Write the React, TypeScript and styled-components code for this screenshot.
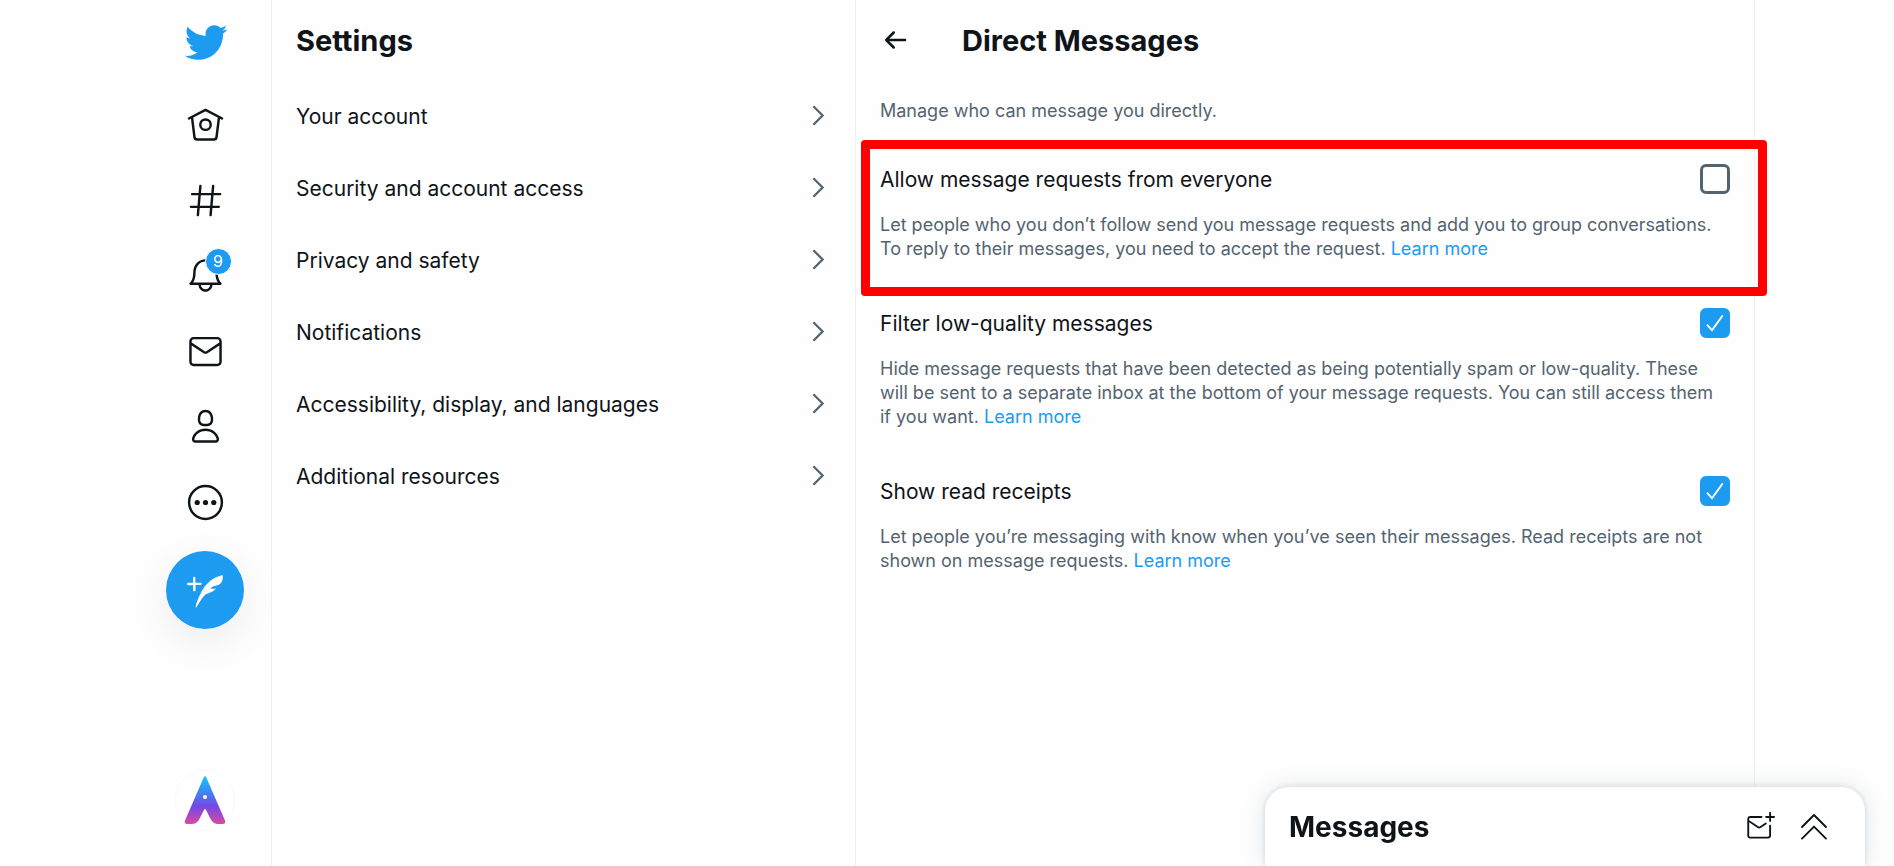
import React, { useState } from 'react';
import styled, { createGlobalStyle } from 'styled-components';

const ink = '#0f1419';
const muted = '#536471';
const blue = '#1d9bf0';
const line = '#eff1f2';

const GlobalStyle = createGlobalStyle`
  *, *::before, *::after { box-sizing: border-box; }
  body {
    margin: 0;
    background: #fefefe;
    color: ${ink};
    font-family: Inter, "Liberation Sans", sans-serif;
    font-size: 18px;
    line-height: 24px;
  }
  h1, h2, p, ul { margin: 0; padding: 0; }
  a { color: inherit; text-decoration: none; }
  button { font: inherit; color: inherit; border: 0; background: none; padding: 0; cursor: pointer; }
`;

const Page = styled.div`
  display: grid;
  grid-template-columns: 132px minmax(0, 584px) minmax(0, 900px);
  justify-content: center;
  min-height: 100vh;
`;

const Sidebar = styled.header`
  position: sticky;
  top: 0;
  display: flex;
  flex-direction: column;
  align-items: center;
  height: 100vh;
  padding: 3px 0 36px;
`;

const LogoLink = styled.a`
  display: grid;
  place-items: center;
  width: 78px;
  height: 78px;
  margin-bottom: 6px;
  color: ${blue};
`;

const NavList = styled.nav`
  display: flex;
  flex-direction: column;
  height: 453px;
`;

const NavLink = styled.a`
  display: grid;
  place-items: center;
  flex: 1;
  width: 75px;
`;

const NavIcon = styled.span`
  position: relative;
  display: grid;
`;

const Badge = styled.span`
  position: absolute;
  top: -8px;
  right: -7px;
  width: 27px;
  height: 27px;
  border: 1px solid #fefefe;
  border-radius: 50%;
  background: ${blue};
  color: #fff;
  font-size: 16px;
  line-height: 25px;
  text-align: center;
`;

const ComposeButton = styled.button`
  display: grid;
  place-items: center;
  width: 78px;
  height: 78px;
  margin-top: 11px;
  border-radius: 50%;
  background: ${blue};
  color: #fff;
  box-shadow: 0 12px 42px rgba(0, 0, 0, 0.08);
`;

const AccountButton = styled.button`
  display: grid;
  place-items: center;
  width: 60px;
  height: 60px;
  margin-top: auto;
  border-radius: 50%;
  background: #fff;
`;

const Column = styled.section`
  border-left: 1px solid ${line};
`;

const DetailColumn = styled(Column)`
  border-right: 1px solid ${line};
`;

const ColumnHeader = styled.div`
  display: flex;
  align-items: center;
  height: 80px;
  padding: 0 24px;
`;

const Title = styled.h2`
  padding-top: 2px;
  font-size: 29px;
  line-height: 36px;
  font-weight: 700;
`;

const BackButton = styled.button`
  display: grid;
  width: 82px;
`;

const MenuList = styled.ul`
  list-style: none;
`;

const MenuLink = styled.a`
  display: flex;
  align-items: center;
  justify-content: space-between;
  height: 72px;
  padding: 0 30px 0 24px;
  font-size: 21px;
`;

const RowText = styled.span`
  padding-top: 2px;
`;

const Intro = styled.p`
  padding: 19px 24px 25px;
  color: ${muted};
`;

const Setting = styled.div`
  position: relative;
  padding: 16px 24px 31px;
`;

const Highlight = styled.div`
  position: absolute;
  inset: -8px -13px -4px 5px;
  border: 9px solid #ff0000;
  border-radius: 4px;
  pointer-events: none;
`;

const SettingLabel = styled.label`
  display: flex;
  align-items: center;
  justify-content: space-between;
  height: 30px;
  margin-bottom: 19px;
  font-size: 21px;
`;

const CheckWrap = styled.span`
  display: grid;
  > * { grid-area: 1 / 1; }
  > svg { pointer-events: none; }
`;

const CheckInput = styled.input`
  appearance: none;
  width: 30px;
  height: 30px;
  margin: 0;
  border: 3px solid ${muted};
  border-radius: 6px;
  &:checked { border-color: ${blue}; background: ${blue}; }
`;

const Description = styled.p`
  padding-right: 8px;
  color: ${muted};
`;

const TextLink = styled.a`
  color: ${blue};
`;

const Drawer = styled.aside`
  position: fixed;
  right: 29px;
  bottom: 0;
  display: flex;
  align-items: center;
  width: 600px;
  max-width: 100%;
  height: 79px;
  padding: 0 36px 0 24px;
  border-radius: 24px 24px 0 0;
  background: #fff;
  box-shadow: 0 0 22px rgba(101, 119, 134, 0.2), 0 0 4px 1px rgba(101, 119, 134, 0.15);
`;

const DrawerTitle = styled(Title)`
  flex: 1;
  padding-top: 0;
  font-size: 28px;
`;

const DrawerActions = styled.div`
  display: flex;
  gap: 24px;
`;

const IconButton = styled.button`
  display: grid;
`;

function Glyph({ d, size }: { d: string; size: number }) {
  return (
    <svg width={size} height={size} viewBox="0 0 24 24" fill="currentColor" aria-hidden="true">
      <path d={d} />
    </svg>
  );
}

const paths = {
  bird: 'M23.643 4.937c-.835.37-1.732.62-2.675.733.962-.576 1.7-1.49 2.048-2.578-.9.534-1.897.922-2.958 1.13-.85-.904-2.06-1.47-3.4-1.47-2.572 0-4.658 2.086-4.658 4.66 0 .364.042.718.12 1.06-3.873-.195-7.304-2.05-9.602-4.868-.4.69-.63 1.49-.63 2.342 0 1.616.823 3.043 2.072 3.878-.764-.025-1.482-.234-2.11-.583v.06c0 2.257 1.605 4.14 3.737 4.568-.392.106-.803.162-1.227.162-.3 0-.593-.028-.877-.082.593 1.85 2.313 3.198 4.352 3.234-1.595 1.25-3.604 1.995-5.786 1.995-.376 0-.747-.022-1.112-.065 2.062 1.323 4.51 2.093 7.14 2.093 8.57 0 13.255-7.098 13.255-13.254 0-.2-.005-.402-.014-.602.91-.658 1.7-1.477 2.323-2.41z',
  hash: 'M21 7.337h-3.93l.372-4.272c.036-.412-.27-.775-.682-.812-.417-.03-.776.27-.812.683l-.383 4.4h-6.32l.37-4.27c.037-.413-.27-.776-.68-.813-.42-.03-.777.27-.813.683l-.382 4.4H3.782c-.414 0-.75.337-.75.75s.336.75.75.75H7.61l-.55 6.327H3c-.414 0-.75.336-.75.75s.336.75.75.75h3.93l-.372 4.272c-.036.412.27.775.682.812l.066.003c.385 0 .712-.295.746-.686l.383-4.4h6.32l-.37 4.27c-.036.413.27.776.682.813l.066.003c.385 0 .712-.295.746-.686l.382-4.4h3.957c.413 0 .75-.337.75-.75s-.337-.75-.75-.75H16.39l.55-6.327H21c.414 0 .75-.336.75-.75s-.336-.75-.75-.75zm-6.115 7.826h-6.32l.55-6.326h6.32l-.55 6.326z',
  bell: 'M21.697 16.468c-.02-.016-2.14-1.64-2.103-6.03.02-2.532-.812-4.782-2.347-6.335C15.872 2.71 14.01 1.94 12.005 1.93h-.013c-2.004.01-3.866.78-5.242 2.174-1.534 1.553-2.368 3.802-2.346 6.334.037 4.33-2.02 5.967-2.102 6.03-.26.193-.366.53-.265.838.102.308.39.515.712.515h4.92c.102 2.31 1.997 4.16 4.33 4.16s4.226-1.85 4.327-4.16h4.922c.322 0 .61-.206.71-.514.103-.307-.003-.645-.263-.838zM12 20.478c-1.505 0-2.73-1.177-2.828-2.658h5.656c-.1 1.48-1.323 2.66-2.828 2.66zM4.38 16.32c.74-1.132 1.548-3.028 1.524-5.896-.018-2.16.644-3.982 1.913-5.267C8.91 4.05 10.397 3.437 12 3.43c1.603.008 3.087.62 4.18 1.728 1.27 1.285 1.933 3.106 1.915 5.267-.024 2.868.785 4.765 1.525 5.896H4.38z',
  mail: 'M19.25 3.018H4.75C3.233 3.018 2 4.252 2 5.77v12.495c0 1.518 1.233 2.753 2.75 2.753h14.5c1.517 0 2.75-1.235 2.75-2.753V5.77c0-1.518-1.233-2.752-2.75-2.752zm-14.5 1.5h14.5c.69 0 1.25.56 1.25 1.25v.714l-8.05 5.367c-.273.18-.626.182-.9-.002L3.5 6.482v-.714c0-.69.56-1.25 1.25-1.25zm14.5 14.998H4.75c-.69 0-1.25-.56-1.25-1.25V8.24l7.24 4.83c.383.256.822.384 1.26.384.44 0 .877-.128 1.26-.383l7.24-4.83v10.022c0 .69-.56 1.25-1.25 1.25z',
  person: 'M12 11.816c1.355 0 2.872-.15 3.84-1.256.814-.93 1.078-2.368.806-4.392-.38-2.825-2.117-4.512-4.646-4.512S7.734 3.343 7.354 6.17c-.272 2.022-.008 3.46.806 4.39.968 1.107 2.485 1.256 3.84 1.256zM8.84 6.368c.162-1.2.787-3.212 3.16-3.212s2.998 2.013 3.16 3.212c.207 1.55.057 2.627-.45 3.205-.455.52-1.266.743-2.71.743s-2.255-.223-2.71-.743c-.507-.578-.657-1.656-.45-3.205zm11.44 12.868c-.877-3.526-4.282-5.99-8.28-5.99s-7.403 2.464-8.28 5.99c-.172.692-.028 1.4.395 1.94.408.52 1.04.82 1.733.82h12.304c.693 0 1.325-.3 1.733-.82.424-.54.567-1.247.394-1.94zm-1.576 1.016c-.126.16-.316.246-.552.246H5.848c-.235 0-.426-.085-.552-.246-.137-.174-.18-.412-.12-.654.71-2.855 3.517-4.85 6.824-4.85s6.114 1.994 6.824 4.85c.06.242.017.48-.12.654z',
  back: 'M20 11H7.414l4.293-4.293c.39-.39.39-1.023 0-1.414s-1.023-.39-1.414 0l-6 6c-.39.39-.39 1.023 0 1.414l6 6c.195.195.45.293.707.293s.512-.098.707-.293c.39-.39.39-1.023 0-1.414L7.414 13H20c.553 0 1-.447 1-1s-.447-1-1-1z',
  compose: 'M8.8 7.2H5.6V3.9c0-.4-.3-.8-.8-.8s-.7.4-.7.8v3.3H.8c-.4 0-.8.3-.8.8s.3.8.8.8h3.3v3.3c0 .4.3.8.8.8s.8-.3.8-.8V8.7H9c.4 0 .8-.3.8-.8s-.5-.7-1-.7zm15-4.9v-.1h-.1c-.1 0-9.2 1.2-14.4 11.7-3.8 7.6-3.6 9.9-3.3 9.9.3.1 3.4-6.5 6.7-9.2 5.2-1.1 6.6-3.6 6.6-3.6s-1.5.2-2.1.2c-.8 0-1.4-.2-1.7-.3 1.3-1.2 2.4-1.5 3.5-1.7.9-.2 1.8-.4 3-1.2 2.2-1.6 1.9-5.5 1.8-5.7z',
  newMessage: 'M23.25 3.25h-2.425V.825c0-.414-.336-.75-.75-.75s-.75.336-.75.75V3.25H16.9c-.414 0-.75.336-.75.75s.336.75.75.75h2.425v2.425c0 .414.336.75.75.75s.75-.336.75-.75V4.75h2.425c.414 0 .75-.336.75-.75s-.336-.75-.75-.75zm-3.175 6.876c-.414 0-.75.336-.75.75v8.078c0 .414-.337.75-.75.75H4.095c-.412 0-.75-.336-.75-.75V8.298l6.778 4.518c.368.246.79.37 1.213.37.422 0 .844-.124 1.212-.37l4.53-3.013c.336-.223.428-.676.204-1.012-.223-.332-.675-.425-1.012-.2l-4.53 3.014c-.246.162-.563.163-.808 0l-7.586-5.06V5.5c0-.414.337-.75.75-.75h9.094c.414 0 .75-.336.75-.75s-.336-.75-.75-.75H4.096c-1.24 0-2.25 1.01-2.25 2.25v13.455c0 1.24 1.01 2.25 2.25 2.25h14.48c1.24 0 2.25-1.01 2.25-2.25v-8.078c0-.415-.337-.75-.75-.75z',
};

const HomeIcon = () => (
  <svg width="39" height="39" viewBox="0 0 24 24" fill="none" stroke="currentColor" strokeWidth="1.5" strokeLinecap="round" strokeLinejoin="round" aria-hidden="true">
    <path d="M1.8 8.3 12 3l10.2 5.3M3.7 7.6l1.5 12.1a1.7 1.7 0 0 0 1.7 1.5h10.2a1.7 1.7 0 0 0 1.7-1.5l1.5-12.1" />
    <circle cx="12" cy="12.1" r="3.2" />
  </svg>
);

const MoreIcon = () => (
  <svg width="39" height="39" viewBox="0 0 24 24" fill="currentColor" aria-hidden="true">
    <circle cx="12" cy="12" r="10.1" fill="none" stroke="currentColor" strokeWidth="1.5" />
    <circle cx="6.9" cy="12" r="1.6" />
    <circle cx="12" cy="12" r="1.6" />
    <circle cx="17.1" cy="12" r="1.6" />
  </svg>
);

const ChevronIcon = () => (
  <svg width="15" height="24" viewBox="0 0 15 24" fill="none" stroke={muted} strokeWidth="2.3" aria-hidden="true">
    <path d="M3.4 2.2 12.6 11.5 3.4 20.8" />
  </svg>
);

const ExpandIcon = () => (
  <svg width="30" height="30" viewBox="0 0 30 30" fill="none" stroke="currentColor" strokeWidth="1.9" strokeLinecap="round" strokeLinejoin="round" aria-hidden="true">
    <path d="M3 15 15 3l12 12M3 26.6l12-12 12 12" />
  </svg>
);

const AccountIcon = () => (
  <svg width="60" height="60" viewBox="0 0 60 60" aria-hidden="true">
    <defs>
      <linearGradient id="account" x1="0" y1="0" x2="0" y2="1">
        <stop offset="0" stopColor="#18c4fa" />
        <stop offset="0.3" stopColor="#3a8df0" />
        <stop offset="0.62" stopColor="#7248e6" />
        <stop offset="1" stopColor="#d84aa4" />
      </linearGradient>
    </defs>
    <circle cx="30" cy="30" r="29.5" fill="#fff" stroke="#f9f9f9" />
    <path fill="url(#account)" d="M28.8 7.2Q30 5.4 31.2 7.2L50 50.6Q51.2 54 47.6 54H43.5Q38 54 35.4 48.8L30.8 39.6Q30 38.2 29.2 39.6L24.6 48.8Q22 54 16.5 54H12.4Q8.8 54 10 50.6Z" />
    <circle cx="30" cy="27" r="2" fill="#fff" />
  </svg>
);

const navItems: { label: string; icon: React.ReactNode; badge?: number }[] = [
  { label: 'Home', icon: <HomeIcon /> },
  { label: 'Explore', icon: <Glyph d={paths.hash} size={39} /> },
  { label: 'Notifications', icon: <Glyph d={paths.bell} size={39} />, badge: 9 },
  { label: 'Messages', icon: <Glyph d={paths.mail} size={39} /> },
  { label: 'Profile', icon: <Glyph d={paths.person} size={39} /> },
  { label: 'More', icon: <MoreIcon /> },
];

const menuItems = [
  'Your account',
  'Security and account access',
  'Privacy and safety',
  'Notifications',
  'Accessibility, display, and languages',
  'Additional resources',
];

const settings = [
  {
    id: 'allow-requests',
    label: 'Allow message requests from everyone',
    text: 'Let people who you don’t follow send you message requests and add you to group conversations. To reply to their messages, you need to accept the request.',
    checked: false,
    highlighted: true,
  },
  {
    id: 'filter-quality',
    label: 'Filter low-quality messages',
    text: 'Hide message requests that have been detected as being potentially spam or low-quality. These will be sent to a separate inbox at the bottom of your message requests. You can still access them if you want.',
    checked: true,
    highlighted: false,
  },
  {
    id: 'read-receipts',
    label: 'Show read receipts',
    text: 'Let people you’re messaging with know when you’ve seen their messages. Read receipts are not shown on message requests.',
    checked: true,
    highlighted: false,
  },
];

function Checkbox({ id, initial }: { id: string; initial: boolean }) {
  const [checked, setChecked] = useState(initial);
  return (
    <CheckWrap>
      <CheckInput id={id} type="checkbox" checked={checked} onChange={(e) => setChecked(e.target.checked)} />
      {checked && (
        <svg width="30" height="30" viewBox="0 0 30 30" fill="none" stroke="#fff" strokeWidth="1.9" strokeLinecap="round" strokeLinejoin="round" aria-hidden="true">
          <path d="M7.4 17.2 12 22.2 22.3 8" />
        </svg>
      )}
    </CheckWrap>
  );
}

export default function App() {
  return (
    <>
      <GlobalStyle />
      <Page>
        <Sidebar>
          <LogoLink href="#home" aria-label="Twitter">
            <Glyph d={paths.bird} size={45} />
          </LogoLink>
          <NavList aria-label="Primary">
            {navItems.map((item) => (
              <NavLink key={item.label} href={`#${item.label.toLowerCase()}`} aria-label={item.label}>
                <NavIcon>
                  {item.icon}
                  {item.badge && <Badge>{item.badge}</Badge>}
                </NavIcon>
              </NavLink>
            ))}
          </NavList>
          <ComposeButton aria-label="Tweet">
            <Glyph d={paths.compose} size={36} />
          </ComposeButton>
          <AccountButton aria-label="Account menu">
            <AccountIcon />
          </AccountButton>
        </Sidebar>

        <Column>
          <ColumnHeader>
            <Title>Settings</Title>
          </ColumnHeader>
          <MenuList>
            {menuItems.map((label) => (
              <li key={label}>
                <MenuLink href="#settings">
                  <RowText>{label}</RowText>
                  <ChevronIcon />
                </MenuLink>
              </li>
            ))}
          </MenuList>
        </Column>

        <DetailColumn>
          <ColumnHeader>
            <BackButton aria-label="Back">
              <Glyph d={paths.back} size={30} />
            </BackButton>
            <Title>Direct Messages</Title>
          </ColumnHeader>
          <Intro>Manage who can message you directly.</Intro>
          {settings.map((s) => (
            <Setting key={s.id}>
              <SettingLabel htmlFor={s.id}>
                <RowText>{s.label}</RowText>
                <Checkbox id={s.id} initial={s.checked} />
              </SettingLabel>
              <Description>
                {s.text} <TextLink href="#learn-more">Learn more</TextLink>
              </Description>
              {s.highlighted && <Highlight />}
            </Setting>
          ))}
        </DetailColumn>
      </Page>

      <Drawer>
        <DrawerTitle>Messages</DrawerTitle>
        <DrawerActions>
          <IconButton aria-label="New message">
            <Glyph d={paths.newMessage} size={30} />
          </IconButton>
          <IconButton aria-label="Expand messages">
            <ExpandIcon />
          </IconButton>
        </DrawerActions>
      </Drawer>
    </>
  );
}
